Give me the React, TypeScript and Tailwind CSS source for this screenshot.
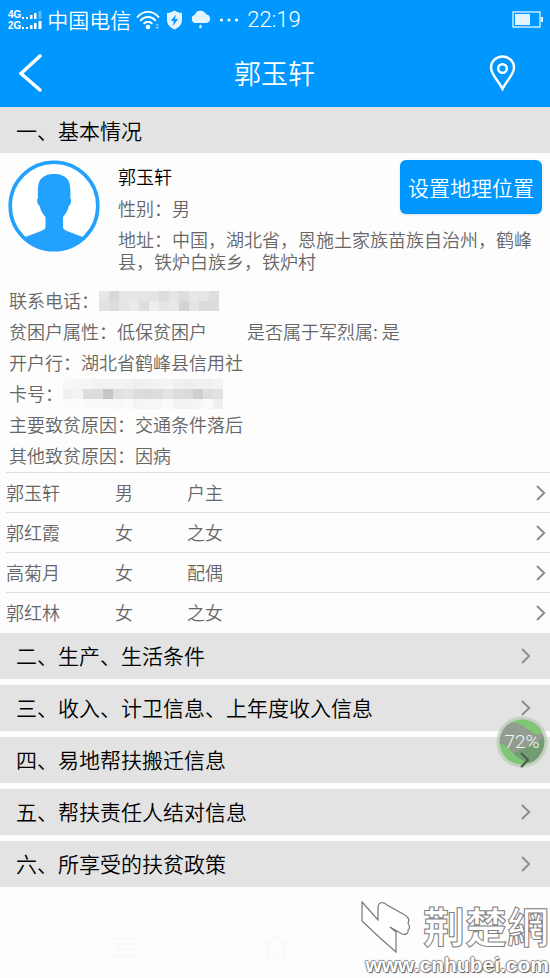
import React from "react";

type Member = {
  name: string;
  sex: string;
  relation: string;
};

const members: Member[] = [
  { name: "郭玉轩", sex: "男", relation: "户主" },
  { name: "郭红霞", sex: "女", relation: "之女" },
  { name: "高菊月", sex: "女", relation: "配偶" },
  { name: "郭红林", sex: "女", relation: "之女" },
];

const sections = [
  "二、生产、生活条件",
  "三、收入、计卫信息、上年度收入信息",
  "四、易地帮扶搬迁信息",
  "五、帮扶责任人结对信息",
  "六、所享受的扶贫政策",
];

// grey levels of the masked values, one entry per 10px block
const phoneMask = [
  [230, 216, 229, 230, 229, 228, 221, 229, 221, 231, 229, 222],
  [226, 220, 229, 234, 222, 237, 229, 231, 212, 228, 219, 220],
];

const cardMask = [
  [248, 246, 246, 242, 243, 243, 242, 238, 241, 243, 244, 240, 238, 240, 240, 243],
  [240, 243, 220, 220, 198, 224, 228, 221, 218, 222, 228, 220, 218, 207, 222, 226],
  [252, 252, 250, 249, 249, 248, 250, 244, 246, 246, 251, 243, 242, 246, 250, 240],
];

const Mask: React.FC<{ rows: number[][]; label: string }> = ({ rows, label }) => (
  <span role="img" aria-label={label} className="flex flex-col">
    {rows.map((row, y) => (
      <span key={y} className="flex">
        {row.map((v, x) => (
          <span
            key={x}
            className="h-[10px] w-[10px]"
            style={{ backgroundColor: `rgb(${v},${v},${v})` }}
          />
        ))}
      </span>
    ))}
  </span>
);

const Chevron: React.FC = () => (
  <svg width="10" height="16" viewBox="0 0 10 16" fill="none" aria-hidden="true">
    <path d="M1 1l7.200 7L1 15" stroke="#8c8c8c" strokeWidth="1.900" />
  </svg>
);

const StatusBar: React.FC = () => (
  <div className="flex h-[39px] items-center pl-2 pr-[7px]">
    <div className="flex items-end gap-px">
      <div className="flex flex-col font-['Liberation_Sans',sans-serif] text-[10px] leading-[11px] font-bold">
        <span>4G</span>
        <span>2G</span>
      </div>
      <svg width="20" height="20" viewBox="0 0 20 20" fill="#fff" aria-hidden="true">
        <path d="M0 6h2v2H0zM4 6h2v2H4zM8 4h2.500v4H8zM12 2h2.500v6H12zM0 16h2v2H0zM4 16h2v2H4zM8 14h2.500v4H8zM12 12h2.500v6H12zM16.500 10h3v8h-3z" />
        <path d="M16.500 0h3v8h-3z" opacity=".35" />
      </svg>
    </div>
    <span className="ml-[5px] text-[21px]">中国电信</span>
    <svg className="ml-[5px]" width="24" height="20" viewBox="0 0 24 20" fill="none" aria-hidden="true">
      <g stroke="#fff" strokeWidth="1.900">
        <path d="M1 7.500C7.500 0 16.500 0 23 7.500" />
        <path d="M4.300 10.800c4.500-5 11-5 15.400 0" />
        <path d="M7.600 13.800c2.600-2.700 6.200-2.700 8.800 0" />
      </g>
      <circle cx="12" cy="17" r="2.300" fill="#fff" />
      <path d="M19.500 15.500l1.800-2 1.800 2zM19.500 17l1.800 2 1.800-2z" fill="#fff" opacity=".6" />
    </svg>
    <svg className="ml-[6px]" width="17" height="20" viewBox="0 0 17 20" aria-hidden="true">
      <path
        d="M8.500.5c2.200 1.500 4.800 2.200 7.500 2.400v7c0 4.300-2.900 7.600-7.500 9.600C3.900 17.500 1 14.200 1 9.900v-7C3.700 2.700 6.300 2 8.500.5z"
        fill="#e3f4ff"
      />
      <path d="M10 4.500L4.800 11h3l-1 5 5.400-7H9z" fill="#0098ff" />
    </svg>
    <svg className="ml-2" width="20" height="20" viewBox="0 0 20 20" fill="#e3f4ff" aria-hidden="true">
      <path d="M4.500 13a4.200 4.200 0 0 1-.7-8.200A6 6 0 0 1 15 4.300 4.400 4.400 0 0 1 15.500 13z" />
      <path d="M9.500 14.300l1.500 2.400a1.500 1.500 0 1 1-3 0z" />
    </svg>
    <svg className="ml-2" width="20" height="4" viewBox="0 0 20 4" fill="#fff" aria-hidden="true">
      <circle cx="2.500" cy="2" r="1.600" />
      <circle cx="10" cy="2" r="1.600" />
      <circle cx="17.500" cy="2" r="1.600" />
    </svg>
    <span className="ml-2 font-[Roboto] text-[22px] font-light">22:19</span>
    <svg className="ml-auto" width="31" height="17" viewBox="0 0 31 17" aria-hidden="true">
      <rect x="1" y="1" width="27" height="15" fill="none" stroke="#e3f4ff" strokeWidth="1.300" />
      <path d="M3 3h15v11H3zM29 6h2v5h-2z" fill="#e3f4ff" />
    </svg>
  </div>
);

const Avatar: React.FC = () => (
  <svg className="shrink-0" width="92" height="92" viewBox="0 0 92 92" role="img" aria-label="头像">
    <defs>
      <clipPath id="face">
        <circle cx="46" cy="46" r="45" />
      </clipPath>
    </defs>
    <circle cx="46" cy="46" r="43.800" fill="#fff" stroke="#22a1fe" strokeWidth="3.600" />
    <path
      clipPath="url(#face)"
      fill="#22a1fe"
      d="M46 14c-6 0-9 1.500-12 4-4 3.500-4.500 9-4 20-1.200.5-1 3.500-.2 5.500.5 1.500 1 2 1.700 2.200 1 4.500 3 8 6 11.300V67c0 2-2 3-5 4.200L16 77.500 14 92h64l-2-14.500-16.500-6.300c-3-1.200-4.500-2.200-4.500-4.200V57c3-3.300 5-6.800 5.800-11.300.8-.2 1.300-.7 1.700-2.200.7-2 .9-5-.3-5.500.7-11 0-16.500-4-20-3-2.500-6.200-4-12.200-4z"
    />
  </svg>
);

const FloatingBall: React.FC = () => (
  <button
    type="button"
    className="absolute top-[716px] right-[2px] flex h-[52px] w-[52px] items-center justify-center text-[19px] text-white/90"
  >
    <svg className="absolute inset-0" width="52" height="52" viewBox="0 0 52 52" aria-hidden="true">
      <defs>
        <clipPath id="ball">
          <circle cx="26" cy="26" r="22.500" />
        </clipPath>
      </defs>
      <circle cx="26" cy="26" r="25.500" fill="#b5cdb2" opacity=".75" />
      <g clipPath="url(#ball)" opacity=".88">
        <path d="M0 0h52v52H0z" fill="#8b9489" />
        <path d="M10 7C20 0 38 2 47 17c-6 3-9 1-14-3S20 5 10 7z" fill="#76c46c" />
        <path d="M2 27c7 1 10 5 15 10s10 8 17 10c-14 6-30-3-32-20z" fill="#76c46c" />
        <path d="M17 37c8-3 18-7 32-15-1 14-8 22-16 25-6-2-11-5-16-10z" fill="#67946a" />
      </g>
      <path d="M25 37l7 7-7 7" fill="none" stroke="#4c5c4a" strokeWidth="2" />
    </svg>
    <span className="relative font-[Roboto] font-light">72%</span>
  </button>
);

const Watermark: React.FC = () => (
  <div className="flex flex-col pr-px">
    <div className="flex items-start justify-between">
      <svg width="50" height="52" viewBox="0 0 50 52" fill="#fff" stroke="#777" strokeWidth="1.200" aria-hidden="true">
        <path d="M1 1l16 18V7c0-6 5-7 9-3l16 9c5 2 7 6 5 9 2 3 2 6 0 7 1 4-3 5-6 4l-12-7 6 5v20L18 36 1 20z" />
      </svg>
      <span className="font-['Noto_Sans_CJK_TC',sans-serif] text-[42px] leading-[48px] font-bold text-white [-webkit-text-stroke:1px_#808080]">
        荆楚網
      </span>
    </div>
    <a
      href="#cnhubei"
      className="pl-1 font-['Liberation_Sans',sans-serif] text-[21px] leading-6 font-bold text-white [text-shadow:1px_1px_1px_#555,-1px_0_1px_#888,0_-1px_1px_#888]"
    >
      www.cnhubei.com
    </a>
  </div>
);

export default function App() {
  return (
    <div className="relative min-h-screen bg-[#fdfdfd] font-['Noto_Sans_CJK_SC',sans-serif] font-[350]">
      <header className="bg-[#0098ff] text-white">
        <StatusBar />
        <div className="grid h-[68px] grid-cols-[1fr_auto_1fr] items-center pr-[34px] pl-[19px]">
          <button type="button" aria-label="返回" className="justify-self-start">
            <svg width="23" height="38" viewBox="0 0 23 38" fill="none" aria-hidden="true">
              <path d="M21 2L2 19.500 21 36" stroke="#fff" strokeWidth="3.500" strokeLinecap="round" />
            </svg>
          </button>
          <h1 className="pl-[14px] text-[27px]">郭玉轩</h1>
          <button type="button" aria-label="地理位置" className="justify-self-end">
            <svg width="27" height="36" viewBox="0 0 27 36" fill="none" stroke="#fff" strokeWidth="2.400" aria-hidden="true">
              <path d="M13.500 34C10 26 2 20 2 12.500a11.500 11 0 0 1 23 0C25 20 17 26 13.500 34z" />
              <circle cx="13.500" cy="13.500" r="4.300" />
            </svg>
          </button>
        </div>
      </header>

      <main>
        <h2 className="flex h-[46px] items-center bg-[#e3e3e3] px-4 pt-px text-[21px] text-black">
          一、基本情况
        </h2>

        <section className="text-[18px] text-[#666]">
          <div className="flex gap-[18px] pt-[7px] pr-2 pl-2">
            <Avatar />
            <div className="flex-1">
              <div className="flex items-start justify-between">
                <div className="leading-8">
                  <p className="text-black">郭玉轩</p>
                  <p>性别：男</p>
                </div>
                <button
                  type="button"
                  className="h-[54px] rounded-md bg-[#0098ff] px-2 pt-px text-[21px] text-white shadow"
                >
                  设置地理位置
                </button>
              </div>
              <p className="mt-1 leading-[22px]">
                地址：中国，湖北省，恩施土家族苗族自治州，鹤峰县，铁炉白族乡，铁炉村
              </p>
            </div>
          </div>

          <div className="mt-[13px] px-[9px] pb-px leading-[31px]">
            <div className="flex items-center">
              联系电话：
              <Mask rows={phoneMask} label="电话已隐藏" />
            </div>
            <div className="flex gap-10">
              <p>贫困户属性：低保贫困户</p>
              <p>是否属于军烈属: 是</p>
            </div>
            <p>开户行：湖北省鹤峰县信用社</p>
            <div className="flex items-center">
              卡号：
              <Mask rows={cardMask} label="卡号已隐藏" />
            </div>
            <p>主要致贫原因：交通条件落后</p>
            <p>其他致贫原因：因病</p>
          </div>

          <div className="pl-[6px]">
            <table className="w-full table-fixed text-left">
              <tbody>
                {members.map((m) => (
                  <tr key={m.name} className="h-10 border-t border-[#e0e0e0]">
                    <td className="w-[109px]">{m.name}</td>
                    <td className="w-[72px]">{m.sex}</td>
                    <td>{m.relation}</td>
                    <td className="w-10 pr-1">
                      <button type="button" aria-label={m.name} className="ml-auto block">
                        <Chevron />
                      </button>
                    </td>
                  </tr>
                ))}
              </tbody>
            </table>
          </div>
        </section>

        <div className="flex flex-col gap-[6px]">
          {sections.map((title) => (
            <button
              key={title}
              type="button"
              className="flex h-[46px] items-center justify-between bg-[#e3e3e3] pt-px pr-[19px] pl-4 text-[21px] text-black"
            >
              {title}
              <Chevron />
            </button>
          ))}
        </div>
      </main>

      <footer className="flex items-start justify-between pt-[14px]">
        <div className="flex items-center gap-[124px] pt-8 pl-[110px] text-[#f9f9f9]">
          <svg width="28" height="22" viewBox="0 0 28 22" stroke="currentColor" strokeWidth="3" aria-hidden="true">
            <path d="M0 2h26M4 8h22M6 14h20M4 20h24" />
          </svg>
          <svg width="28" height="28" viewBox="0 0 28 28" fill="none" stroke="currentColor" strokeWidth="3" aria-hidden="true">
            <path d="M2 14L14 3l12 11M6 12v13h16V12M10 20h8" />
          </svg>
        </div>
        <Watermark />
      </footer>

      <FloatingBall />
    </div>
  );
}
